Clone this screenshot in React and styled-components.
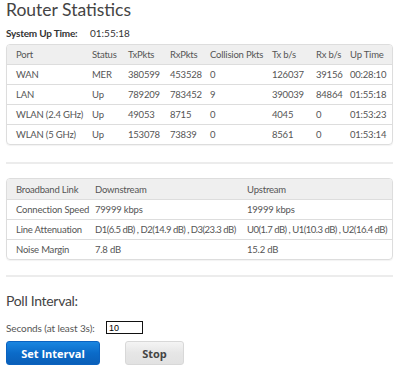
import React from 'react';
import styled, { createGlobalStyle } from 'styled-components';

const GlobalStyle = createGlobalStyle`
  body {
    margin: 0;
    background: #fff;
    font-family: Lato, "Liberation Sans", sans-serif;
    color: #555;
  }
`;

const Page = styled.div`
  width: 400px;
  padding: 0 7px 0 6px;
  box-sizing: border-box;
`;

const Title = styled.h1`
  margin: 0;
  font-size: 17.5px;
  font-weight: 400;
  line-height: 19px;
  color: #444;
`;

const UpTime = styled.div`
  display: flex;
  margin-top: 8px;
  font-size: 10px;
  line-height: 12px;
  color: #333;
`;

const UpLabel = styled.span`
  width: 84px;
  font-weight: 700;
  letter-spacing: -0.2px;
`;

const Box = styled.div`
  margin-top: ${(p) => p.top}px;
  border: 1px solid #ddd;
  border-radius: 4px;
  overflow: hidden;
  box-shadow: 0 1px 1px rgba(0, 0, 0, 0.05);
`;

const Table = styled.table`
  width: 100%;
  border-collapse: collapse;
  table-layout: fixed;
  font-size: 9.5px;
  letter-spacing: -0.2px;
  color: #555;
`;

const Th = styled.th`
  text-align: left;
  font-weight: 400;
  height: ${(p) => p.h || 18}px;
  padding: 0 0 0 9px;
  background: #efefef;
  white-space: nowrap;
  border-bottom: 1px solid #ddd;
`;

const Td = styled.td`
  height: 19px;
  padding: 0 0 0 9px;
  white-space: nowrap;
  letter-spacing: ${(p) => (p.tight ? '-0.5px' : 'inherit')};
`;

const Tr = styled.tr`
  & + & td {
    border-top: 1px solid #ddd;
  }
`;

const Divider = styled.hr`
  margin: ${(p) => p.top}px 0 0;
  border: 0;
  height: 2px;
  background: #ececec;
`;

const PollTitle = styled.h2`
  margin: 15px 0 0;
  font-size: 14px;
  letter-spacing: -0.3px;
  font-weight: 400;
  line-height: 18px;
  color: #444;
`;

const FieldRow = styled.div`
  display: flex;
  align-items: center;
  margin-top: 11px;
  font-size: 10px;
  letter-spacing: -0.1px;
  color: #555;
`;

const FieldLabel = styled.label`
  width: 100px;
`;

const Input = styled.input`
  width: 37px;
  height: 13px;
  box-sizing: border-box;
  border: 1px solid #111;
  padding: 0 2px;
  font-family: "Liberation Sans", sans-serif;
  font-size: 9px;
  color: #000;
  outline: none;
`;

const Buttons = styled.div`
  display: flex;
  gap: 25px;
  margin-top: 7px;
`;

const Button = styled.button`
  height: 24px;
  border-radius: 3px;
  font-family: "Open Sans", sans-serif;
  font-size: 11px;
  font-weight: 700;
  cursor: pointer;
  padding: 0;
  border: 1px solid ${(p) => (p.primary ? '#0a62c0' : '#d8d8d8')};
  color: ${(p) => (p.primary ? '#fff' : '#444')};
  background: ${(p) =>
    p.primary
      ? 'linear-gradient(#1a86e0, #0b6bc9 50%, #0a5fb8)'
      : 'linear-gradient(#f4f4f4, #e6e6e6 50%, #e2e2e2)'};
  width: ${(p) => p.w}px;
`;

const ports = [
  ['WAN', 'MER', '380599', '453528', '0', '126037', '39156', '00:28:10'],
  ['LAN', 'Up', '789209', '783452', '9', '390039', '84864', '01:55:18'],
  ['WLAN (2.4 GHz)', 'Up', '49053', '8715', '0', '4045', '0', '01:53:23'],
  ['WLAN (5 GHz)', 'Up', '153078', '73839', '0', '8561', '0', '01:53:14'],
];

const portCols = [
  ['Port', 76],
  ['Status', 36],
  ['TxPkts', 42],
  ['RxPkts', 40],
  ['Collision Pkts', 62],
  ['Tx b/s', 44],
  ['Rx b/s', 34],
  ['Up Time', 53],
];

const link = [
  ['Connection Speed', '79999 kbps', '19999 kbps'],
  [
    'Line Attenuation',
    'D1(6.5 dB) , D2(14.9 dB) , D3(23.3 dB)',
    'U0(1.7 dB) , U1(10.3 dB) , U2(16.4 dB)',
  ],
  ['Noise Margin', '7.8 dB', '15.2 dB'],
];

const linkCols = [
  ['Broadband Link', 79],
  ['Downstream', 152],
  ['Upstream', 156],
];

function DataTable({ cols, rows, headH }) {
  return (
    <Table>
      <colgroup>
        {cols.map(([name, w]) => (
          <col key={name} style={{ width: w }} />
        ))}
      </colgroup>
      <thead>
        <tr>
          {cols.map(([name]) => (
            <Th key={name} h={headH}>{name}</Th>
          ))}
        </tr>
      </thead>
      <tbody>
        {rows.map((row) => (
          <Tr key={row[0]}>
            {row.map((cell, i) => (
              <Td key={i} tight={cell.length > 24}>{cell}</Td>
            ))}
          </Tr>
        ))}
      </tbody>
    </Table>
  );
}

export default function App() {
  return (
    <Page>
      <GlobalStyle />
      <Title>Router Statistics</Title>
      <UpTime>
        <UpLabel>System Up Time:</UpLabel>
        <span>01:55:18</span>
      </UpTime>
      <Box top={5}>
        <DataTable cols={portCols} rows={ports} headH={19} />
      </Box>
      <Divider top={17} />
      <Box top={14}>
        <DataTable cols={linkCols} rows={link} headH={20} />
      </Box>
      <Divider top={15} />
      <PollTitle>Poll Interval:</PollTitle>
      <FieldRow>
        <FieldLabel>Seconds (at least 3s):</FieldLabel>
        <Input defaultValue="10" />
      </FieldRow>
      <Buttons>
        <Button primary w={94}>Set Interval</Button>
        <Button w={59}>Stop</Button>
      </Buttons>
    </Page>
  );
}
